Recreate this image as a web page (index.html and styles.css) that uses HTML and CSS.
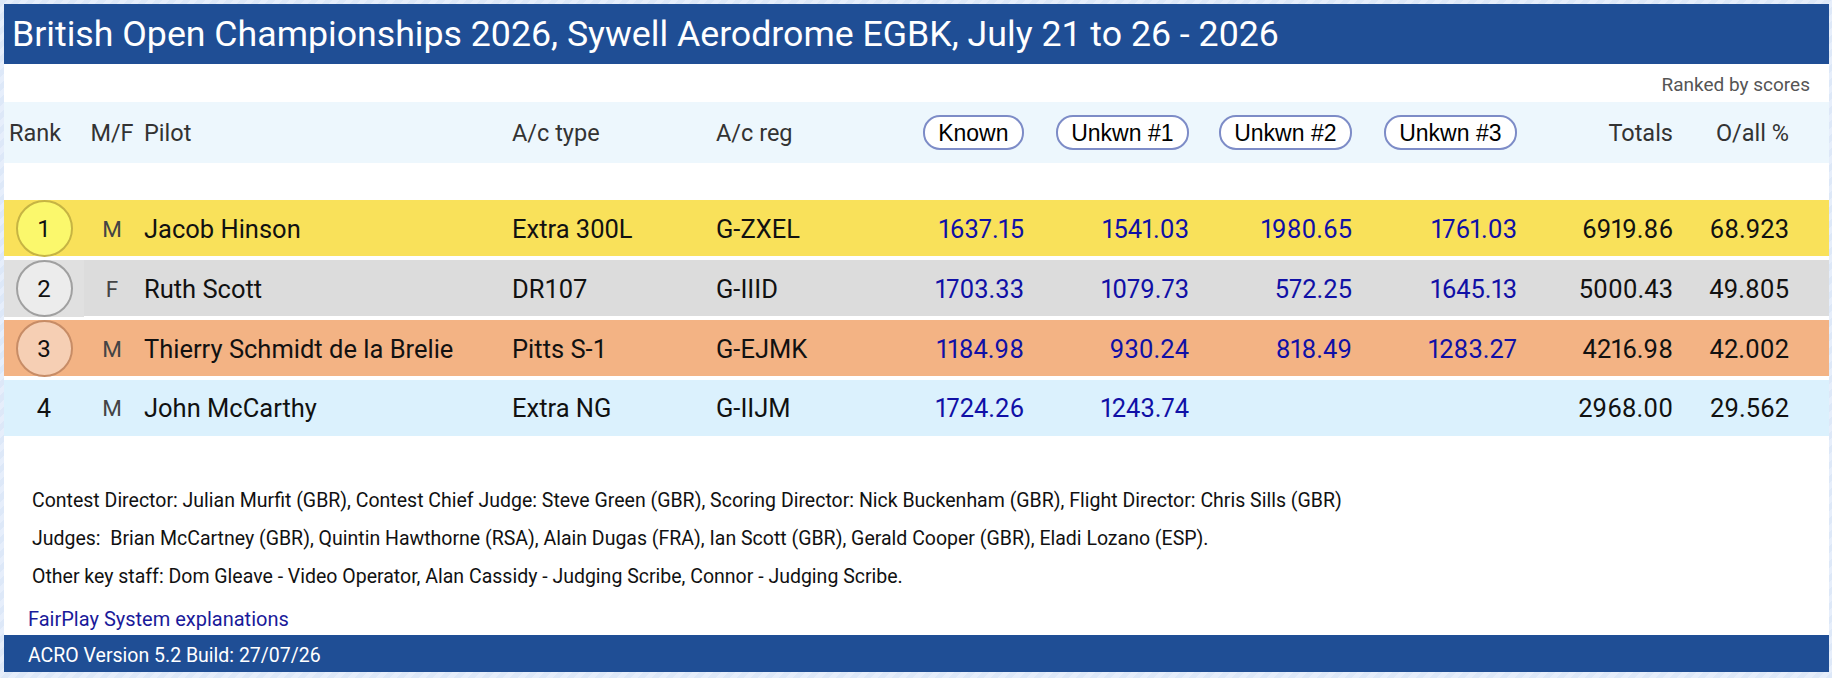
FILE: index.html
```html
<!DOCTYPE html>
<html lang="en">
<head>
<meta charset="utf-8">
<title>British Open Championships 2026 - Results</title>
<link rel="stylesheet" href="styles.css">
</head>
<body>
<div class="page">
  <h1 class="title">British Open Championships 2026, Sywell Aerodrome EGBK, July 21 to 26 - 2026</h1>
  <div class="ranked">Ranked by scores</div>

  <div class="grid head">
    <div class="c-rank hl">Rank</div>
    <div class="c-mf">M/F</div>
    <div class="c-left">Pilot</div>
    <div class="c-left">A/c type</div>
    <div class="c-left">A/c reg</div>
    <div class="c-num"><span class="pill">Known</span></div>
    <div class="c-num"><span class="pill">Unkwn #1</span></div>
    <div class="c-num"><span class="pill">Unkwn #2</span></div>
    <div class="c-num"><span class="pill">Unkwn #3</span></div>
    <div class="c-num">Totals</div>
    <div class="c-num">O/all %</div>
    <div></div>
  </div>

  <div class="rows">
    <div class="grid row gold">
      <div class="c-rank"><span class="medal m1">1</span></div>
      <div class="c-mf mf">M</div>
      <div class="c-left">Jacob Hinson</div>
      <div class="c-left">Extra 300L</div>
      <div class="c-left">G-ZXEL</div>
      <div class="c-num score">1637.15</div>
      <div class="c-num score">1541.03</div>
      <div class="c-num score">1980.65</div>
      <div class="c-num score">1761.03</div>
      <div class="c-num">6919.86</div>
      <div class="c-num">68.923</div>
      <div></div>
    </div>
    <div class="grid row silver">
      <div class="c-rank"><span class="medal m2">2</span></div>
      <div class="c-mf mf">F</div>
      <div class="c-left">Ruth Scott</div>
      <div class="c-left">DR107</div>
      <div class="c-left">G-IIID</div>
      <div class="c-num score">1703.33</div>
      <div class="c-num score">1079.73</div>
      <div class="c-num score">572.25</div>
      <div class="c-num score">1645.13</div>
      <div class="c-num">5000.43</div>
      <div class="c-num">49.805</div>
      <div></div>
    </div>
    <div class="grid row bronze">
      <div class="c-rank"><span class="medal m3">3</span></div>
      <div class="c-mf mf">M</div>
      <div class="c-left">Thierry Schmidt de la Brelie</div>
      <div class="c-left">Pitts S-1</div>
      <div class="c-left">G-EJMK</div>
      <div class="c-num score">1184.98</div>
      <div class="c-num score">930.24</div>
      <div class="c-num score">818.49</div>
      <div class="c-num score">1283.27</div>
      <div class="c-num">4216.98</div>
      <div class="c-num">42.002</div>
      <div></div>
    </div>
    <div class="grid row plain">
      <div class="c-rank">4</div>
      <div class="c-mf mf">M</div>
      <div class="c-left">John McCarthy</div>
      <div class="c-left">Extra NG</div>
      <div class="c-left">G-IIJM</div>
      <div class="c-num score">1724.26</div>
      <div class="c-num score">1243.74</div>
      <div class="c-num score"></div>
      <div class="c-num score"></div>
      <div class="c-num">2968.00</div>
      <div class="c-num">29.562</div>
      <div></div>
    </div>
  </div>

  <div class="staff">
    <p>Contest Director: Julian Murfit (GBR), Contest Chief Judge: Steve Green (GBR), Scoring Director: Nick Buckenham (GBR), Flight Director: Chris Sills (GBR)</p>
    <p>Judges:&nbsp; Brian McCartney (GBR), Quintin Hawthorne (RSA), Alain Dugas (FRA), Ian Scott (GBR), Gerald Cooper (GBR), Eladi Lozano (ESP).</p>
    <p>Other key staff: Dom Gleave - Video Operator, Alan Cassidy - Judging Scribe, Connor - Judging Scribe.</p>
  </div>

  <a class="fairplay" href="#">FairPlay System explanations</a>

  <div class="footer">ACRO Version 5.2 Build: 27/07/26</div>
</div>
</body>
</html>
```

FILE: styles.css
```css
html, body {
  margin: 0;
  padding: 0;
}

body {
  padding: 4px 3px 6px 4px;
  background-color: #dfe9f8;
  background-image: repeating-linear-gradient(135deg, #dde8f8 0px, #dde8f8 5px, #e6eefb 5px, #e6eefb 10px);
  font-family: Roboto, "Noto Sans", sans-serif;
  color: #111;
}

.page {
  background: #ffffff;
  display: flex;
  flex-direction: column;
}

.title {
  margin: 0;
  height: 60px;
  line-height: 60px;
  padding-left: 8px;
  background: #1f4e95;
  color: #ffffff;
  font-weight: 400;
  font-size: 35.7px;
  white-space: nowrap;
}

.ranked {
  height: 38px;
  line-height: 42px;
  text-align: right;
  padding-right: 19px;
  font-size: 19px;
  color: #555;
}

.grid {
  display: grid;
  grid-template-columns: 80px 56px 368px 204px 192px 120px 165px 163px 165px 156px 116px 1fr;
  align-items: center;
}

.head {
  height: 61px;
  background: #edf7fd;
  font-size: 23.5px;
  color: #333;
}

.head .hl {
  text-align: left;
  padding-left: 5px;
}

.c-rank {
  text-align: center;
}

.row .c-rank {
  align-self: stretch;
  display: flex;
  align-items: center;
  justify-content: center;
}

.c-mf {
  text-align: center;
}

.c-left {
  padding-left: 4px;
  white-space: nowrap;
}

.c-num {
  text-align: right;
  white-space: nowrap;
  font-variant-numeric: proportional-nums;
}

.pill {
  display: inline-block;
  height: 31px;
  line-height: 32px;
  padding: 0 13.5px;
  border: 2px solid #7d8cc7;
  border-radius: 17px;
  background: #ffffff;
  color: #000;
  font-family: "Liberation Sans", Arial, sans-serif;
  font-size: 23px;
}

.rows {
  margin-top: 37px;
  display: flex;
  flex-direction: column;
  gap: 4px;
}

.row {
  height: 56px;
  font-size: 25.5px;
  color: #111;
}

.gold { background: #f9e15a; }
.silver { background: #dcdcdc; }
.silver .c-rank { background: #e0e0e0; }
.bronze { background: #f3b384; }
.plain { background: #dbf1fd; }

.mf {
  color: #444;
  font-size: 22.5px;
}

.score {
  color: #1010a6;
}

.medal {
  display: inline-flex;
  align-items: center;
  justify-content: center;
  width: 57px;
  height: 57px;
  flex: none;
  border-radius: 50%;
  box-sizing: border-box;
  font-size: 24px;
  color: #111;
}

.m1 { background: #fbf86c; border: 2px solid #c6b443; }
.m2 { background: #ececec; border: 2px solid #a0a0a0; }
.m3 { background: #f6cfb4; border: 2px solid #c78c66; }

.staff {
  margin-top: 46px;
  padding-left: 28px;
  font-size: 19.5px;
  color: #111;
}

.staff p {
  margin: 0;
  height: 38px;
  line-height: 38px;
  white-space: nowrap;
}

.fairplay {
  display: block;
  margin-top: 7px;
  padding-left: 24px;
  height: 32px;
  line-height: 32px;
  font-size: 20px;
  color: #1a1a9a;
  text-decoration: none;
}

.footer {
  height: 37px;
  line-height: 41px;
  padding-left: 24px;
  background: #1f4e95;
  color: #ffffff;
  font-size: 19.5px;
}
```
